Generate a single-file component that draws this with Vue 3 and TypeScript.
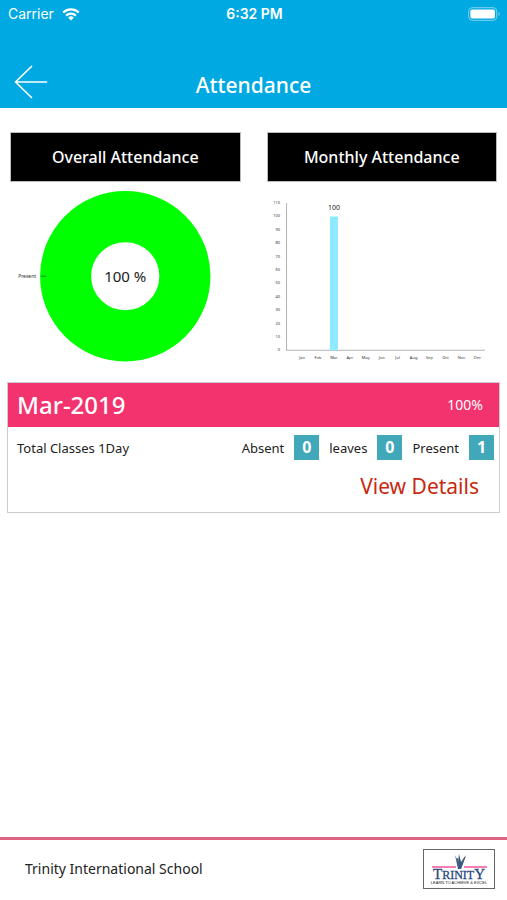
<script setup lang="ts">
interface MonthValue {
  name: string
  value: number
}

interface Count {
  label: string
  value: number
}

const months: MonthValue[] = [
  'Jan', 'Feb', 'Mar', 'Apr', 'May', 'Jun', 'Jul', 'Aug', 'Sep', 'Oct', 'Nov', 'Dec',
].map((name) => ({ name, value: name === 'Mar' ? 100 : 0 }))

const ticks: number[] = Array.from({ length: 12 }, (_, i) => i * 10)

const baseline = 168
const yFor = (value: number): number => baseline - (value * 147) / 110
const xFor = (index: number): number => 35 + index * 15.9

const counts: Count[] = [
  { label: 'Absent', value: 0 },
  { label: 'leaves', value: 0 },
  { label: 'Present', value: 1 },
]
</script>

<template>
  <div class="page">
    <header class="top">
      <div class="status">
        <div class="carrier">
          <span>Carrier</span>
          <svg width="18" height="13" viewBox="0 0 18 13" aria-hidden="true">
            <g fill="none" stroke="#fff" stroke-width="2.3">
              <path d="M1.2 4.5a11.3 11.3 0 0 1 15.6 0" />
              <path d="M4.1 7.6a7 7 0 0 1 9.8 0" />
            </g>
            <path d="M6.2 9.7a4 4 0 0 1 5.6 0L9 12.6z" fill="#fff" />
          </svg>
        </div>
        <span class="clock">6:32 PM</span>
        <svg class="battery" width="33" height="14" viewBox="0 0 33 14" aria-hidden="true">
          <rect x="0.7" y="0.7" width="28" height="12.6" rx="3.5" fill="none" stroke="#7fd3f1" />
          <rect x="2.4" y="2.4" width="24.6" height="9.2" rx="1.8" fill="#fff" />
          <path d="M30.5 4.8c1.6.7 1.6 3.7 0 4.4z" fill="#7fd3f1" />
        </svg>
      </div>
      <div class="nav">
        <button class="back" type="button" aria-label="Back">
          <svg width="34" height="34" viewBox="0 0 34 34" aria-hidden="true">
            <path
              d="M17.5 1.5 1.5 17l16 15.5M1.5 17h31"
              fill="none" stroke="#fff" stroke-width="1.7" stroke-linecap="round" stroke-linejoin="round"
            />
          </svg>
        </button>
        <h1>Attendance</h1>
      </div>
    </header>

    <main>
      <div class="charts">
        <section>
          <h2>Overall Attendance</h2>
          <svg class="chart" viewBox="0 0 230 190" role="img" aria-label="Overall attendance">
            <circle cx="115" cy="94" r="59.5" fill="none" stroke="#00ff00" stroke-width="51" />
            <text class="slice" x="26" y="96" text-anchor="end">Present</text>
            <path d="M31 94h5" stroke="#063" stroke-width="0.8" />
            <text class="total" x="115" y="100" text-anchor="middle">100 %</text>
          </svg>
        </section>
        <section>
          <h2>Monthly Attendance</h2>
          <svg class="chart" viewBox="0 0 230 190" role="img" aria-label="Monthly attendance">
            <path d="M19.5 21v147h198" fill="none" stroke="#b4b4b4" />
            <text
              v-for="tick in ticks" :key="tick"
              class="tiny" x="13" :y="yFor(tick) + 1" text-anchor="end"
            >{{ tick }}</text>
            <g v-for="(month, i) in months" :key="month.name">
              <template v-if="month.value">
                <rect
                  :x="xFor(i) - 4" :y="yFor(month.value)" width="8"
                  :height="baseline - yFor(month.value)" fill="#8eeafe"
                />
                <text class="value" :x="xFor(i)" :y="yFor(month.value) - 6" text-anchor="middle">{{ month.value }}</text>
              </template>
              <text class="tiny" :x="xFor(i)" y="177" text-anchor="middle">{{ month.name }}</text>
            </g>
          </svg>
        </section>
      </div>

      <article class="card">
        <div class="card-head">
          <h3>Mar-2019</h3>
          <span>100%</span>
        </div>
        <div class="row">
          <span>Total Classes 1Day</span>
          <div class="counts">
            <div v-for="count in counts" :key="count.label" class="count">
              <span>{{ count.label }}</span>
              <strong>{{ count.value }}</strong>
            </div>
          </div>
        </div>
        <a class="details" href="#">View Details</a>
      </article>
    </main>

    <footer>
      <span>Trinity International School</span>
      <svg width="72" height="40" viewBox="0 0 72 40" role="img" aria-label="Trinity, learn to achieve and excel">
        <rect x="0.5" y="0.5" width="71" height="39" fill="#fff" stroke="#666" />
        <path d="M9 18h24M41 18h23" stroke="#f0569c" stroke-width="1.6" />
        <path d="M32 6l3 7 1-8 2 8 5-7-3 9-2 5h-3z" fill="#345889" />
        <path d="M34 9l2 8M39 14l3-6" stroke="#56606c" stroke-width="1.2" />
        <text class="logo-name" x="36" y="30" text-anchor="middle"><tspan class="cap">T</tspan>RINIT<tspan class="cap">Y</tspan></text>
        <text class="logo-line" x="36" y="35" text-anchor="middle">LEARN TO ACHIEVE &amp; EXCEL</text>
      </svg>
    </footer>
  </div>
</template>

<style>
body {
  margin: 0;
  background: #fff;
}
</style>

<style scoped>
.page {
  display: flex;
  flex-direction: column;
  min-height: 100vh;
  font-family: "Noto Sans", sans-serif;
  font-size: 14px;
  line-height: 20px;
  color: #222;
}

h1,
h2,
h3 {
  margin: 0;
  font-weight: 500;
}

.top {
  height: 108px;
  background: #00a9e2;
  color: #fff;
}

.status {
  display: grid;
  grid-template-columns: 1fr auto 1fr;
  align-items: center;
  height: 28px;
  padding: 0 6px 0 8px;
  font-family: Inter, sans-serif;
}

.carrier {
  display: flex;
  align-items: center;
  gap: 8px;
}

.clock {
  font-weight: 600;
}

.battery {
  justify-self: end;
}

.nav {
  display: grid;
  grid-template-columns: 48px 1fr 48px;
  align-items: center;
  padding-top: 36px;
}

.back {
  display: flex;
  height: 34px;
  padding: 0 0 0 14px;
  border: 0;
  background: none;
  cursor: pointer;
}

h1 {
  padding-top: 7px;
  font-size: 21px;
  line-height: 28px;
  text-align: center;
}

main {
  flex: 1;
  padding: 24px 7px;
}

.charts {
  display: grid;
  grid-template-columns: 1fr 1fr;
  gap: 26px;
  padding: 0 3px;
}

h2 {
  padding: 14px 0;
  border: 1px solid #bbb;
  background: #000;
  color: #fff;
  font-size: 16px;
  line-height: 20px;
  text-align: center;
}

.chart {
  display: block;
  width: 100%;
  font-family: "Noto Sans", sans-serif;
}

.tiny {
  font-size: 4px;
  fill: #333;
}

.slice {
  font-size: 5px;
  fill: #333;
}

.value {
  font-size: 7px;
  fill: #222;
}

.total {
  font-size: 15px;
  fill: #222;
}

.card {
  display: flex;
  flex-direction: column;
  margin-top: 10px;
  border: 1px solid #ccc;
}

.card-head {
  display: flex;
  align-items: center;
  justify-content: space-between;
  height: 44px;
  padding: 0 16px 0 9px;
  background: #f2336e;
  color: #fff;
}

h3 {
  font-size: 24px;
  line-height: 32px;
}

.row {
  display: flex;
  align-items: center;
  justify-content: space-between;
  padding: 8px 5px 0 9px;
  font-size: 13px;
}

.counts,
.count {
  display: flex;
  align-items: center;
  gap: 10px;
}

.count strong {
  width: 25px;
  background: #40a8b9;
  color: #fff;
  font-size: 16px;
  font-weight: 700;
  line-height: 25px;
  text-align: center;
}

.details {
  align-self: flex-end;
  padding: 12px 20px;
  color: #c8280f;
  font-size: 21px;
  line-height: 28px;
  text-decoration: none;
}

footer {
  display: flex;
  align-items: center;
  justify-content: space-between;
  height: 58px;
  padding: 0 12px 2px 25px;
  border-top: 3px solid #dc6480;
}

.logo-name {
  font-family: "Liberation Serif", serif;
  font-size: 12px;
  fill: #29497c;
  stroke: #29497c;
  stroke-width: 0.3;
}

.cap {
  font-size: 15px;
}

.logo-line {
  font-family: "Liberation Sans", sans-serif;
  font-size: 4px;
  fill: #222;
}
</style>
